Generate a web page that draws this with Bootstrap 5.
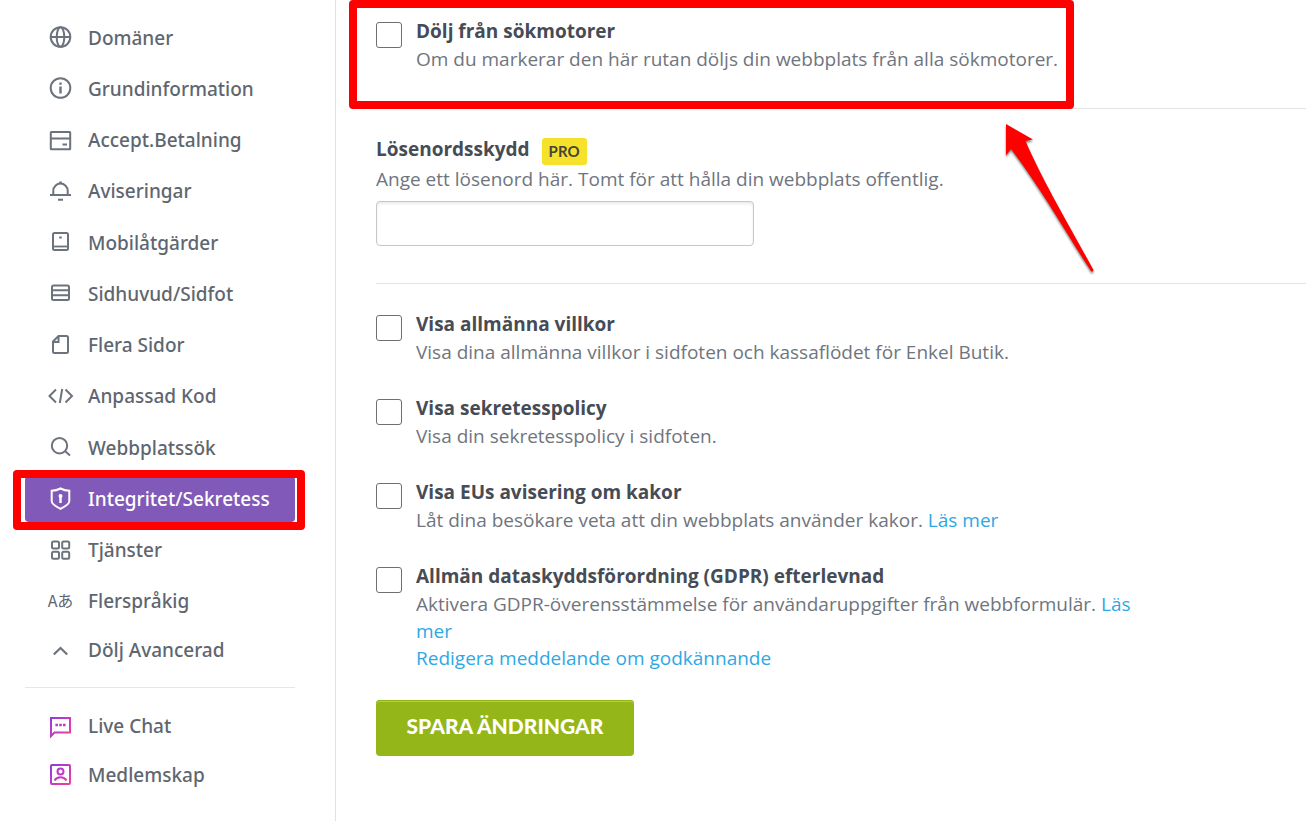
<!DOCTYPE html>
<html lang="sv">
<head>
<meta charset="utf-8">
<meta name="viewport" content="width=device-width, initial-scale=1">
<title>Integritet/Sekretess</title>
<link href="https://cdn.jsdelivr.net/npm/bootstrap@5.3.0/dist/css/bootstrap.min.css" rel="stylesheet">
<style>
  body { font-family: "Open Sans", "Noto Sans", sans-serif; font-size: 19px; line-height: 27px; color: #6f757e; }
  .sidebar { width: 336px; padding: 12px 40px 16px 25px; border-right: 1px solid #e2e2e4; }
  .menu-main { display: grid; grid-auto-rows: 1fr; min-height: 615px; }
  .menu-link { gap: 14px; padding: 0 0 0 22px; border-radius: 4px; color: #60666f; font-family: "Noto Sans", sans-serif; font-size: 19px; font-weight: 500; }
  .menu-main .menu-link { height: 46px; width: 100%; padding-top: 1px; }
  .menu-toggle { height: 47px; }
  .menu-extra .menu-link { height: 49px; }
  .menu-link svg { width: 27px; height: 26px; flex: none; fill: none; stroke: #6d737d; stroke-width: 2; }
  .menu-link.active { background: #8159b8; color: #fff; }
  .menu-link.active svg { stroke: #fff; }
  .menu-link svg.pink-icon { stroke: url(#pink); }
  .menu-rule { margin: 13px 0 14px; border-top: 1px solid #e6e6e8; opacity: 1; }
  .glyph { width: 27px; padding-bottom: 3px; font: 400 16px/26px "Noto Sans CJK JP", sans-serif; text-align: center; white-space: nowrap; }
  .callout-frame { border: 8px solid #f00; border-radius: 4px; pointer-events: none; }
  .frame-menu { inset: -6px -10px -8px -12px; }
  .content-pane { padding-left: 40px; }
  .setting { gap: 14px; max-width: 770px; }
  .setting-title { font-size: 19px; line-height: 29px; font-weight: 700; color: #464c55; }
  .setting a { color: #2ea8e4; text-decoration: none; }
  .form-check-input.tick { width: 26px; height: 26px; margin: 5px 0 0; border: 1px solid #6f6f6f; border-radius: 3px; flex: none; }
  .section-search { padding: 17px 0 35px; border-bottom: 1px solid #e2e2e4; }
  .frame-search { top: 0; bottom: -1px; left: -27px; width: 725px; }
  .arrow-mark { top: 118px; left: 624px; width: 100px; height: 160px; filter: drop-shadow(0 2px 1px rgba(0,0,0,.5)); }
  .section-password { padding: 26px 0 37px; border-bottom: 1px solid #e2e2e4; }
  .password-head { min-height: 31px; }
  .pro-tag { background: #f6e22b; color: #46443a; font: 700 15px/27px Lato, sans-serif; padding: 0 7px; border-radius: 3px; margin: 3px 0 0 12px; }
  .password-field { width: 378px; height: 45px; margin-top: 8px; border: 1px solid #c6c6cb; border-radius: 4px; box-shadow: inset 0 2px 3px rgba(0,0,0,.08); }
  .section-legal { padding-top: 26px; gap: 28px; }
  .save-btn { width: 258px; height: 56px; margin: 28px 0 16px; padding: 0 0 4px; border: 0; border-radius: 4px; background: #94b619; color: #fff; font: 900 21px/28px Lato, sans-serif; box-shadow: inset 0 1px 0 #94b619, inset 0 2px 0 #b0ca55; }
  .save-btn:hover { background: #87a716; color: #fff; }
</style>
</head>
<body>
<svg width="0" height="0" class="position-absolute" aria-hidden="true">
  <defs><linearGradient id="pink" x1="2" y1="2" x2="24" y2="24" gradientUnits="userSpaceOnUse"><stop offset="0" stop-color="#9038e0"/><stop offset=".6" stop-color="#cf3cba"/><stop offset="1" stop-color="#f5428c"/></linearGradient></defs>
</svg>
<div class="d-flex min-vh-100">
  <nav class="sidebar flex-shrink-0" aria-label="Inställningar">
    <ul class="menu-main list-unstyled m-0">
      <li class="d-flex align-items-center"><a href="#" class="menu-link d-flex align-items-center text-decoration-none"><svg viewBox="0 0 27 26"><circle cx="13.5" cy="12" r="9.8"/><ellipse cx="13.5" cy="12" rx="3.8" ry="9.8"/><path d="M3.5 12h20"/></svg>Domäner</a></li>
      <li class="d-flex align-items-center"><a href="#" class="menu-link d-flex align-items-center text-decoration-none"><svg viewBox="0 0 27 26"><circle cx="13.5" cy="12" r="9.8"/><path d="M13.5 10.5v7M13.5 6.5v2.2" stroke-width="2.4"/></svg>Grundinformation</a></li>
      <li class="d-flex align-items-center"><a href="#" class="menu-link d-flex align-items-center text-decoration-none"><svg viewBox="0 0 27 26"><rect x="3.8" y="4" width="19.4" height="17.2" rx=".5"/><path d="M4 10.4h19M15.5 16.5h4.5"/></svg>Accept.Betalning</a></li>
      <li class="d-flex align-items-center"><a href="#" class="menu-link d-flex align-items-center text-decoration-none"><svg viewBox="0 0 27 26"><path d="M3 16h21M6.3 16v-4.200a7.200 7.200 0 0 1 14.400 0V16M12.200 3.400h2.600M11 20.800h5"/></svg>Aviseringar</a></li>
      <li class="d-flex align-items-center"><a href="#" class="menu-link d-flex align-items-center text-decoration-none"><svg viewBox="0 0 27 26"><rect x="6" y="3" width="15" height="17" rx="1.500"/><path d="M7 16.500h13" stroke-width="1.800"/><path d="M12.200 7.500h2.600"/></svg>Mobilåtgärder</a></li>
      <li class="d-flex align-items-center"><a href="#" class="menu-link d-flex align-items-center text-decoration-none"><svg viewBox="0 0 27 26"><rect x="5" y="4.500" width="17" height="14.500" rx="1.500"/><path d="M5 9.300h17M5 14.200h17"/></svg>Sidhuvud/Sidfot</a></li>
      <li class="d-flex align-items-center"><a href="#" class="menu-link d-flex align-items-center text-decoration-none"><svg viewBox="0 0 27 26"><path d="M11.500 3H19.500a1.500 1.500 0 0 1 1.500 1.500V18.500a1.500 1.500 0 0 1-1.500 1.500H7.500A1.500 1.500 0 0 1 6 18.500V8.500ZM11.500 3.500V9H6"/></svg>Flera Sidor</a></li>
      <li class="d-flex align-items-center"><a href="#" class="menu-link d-flex align-items-center text-decoration-none"><svg viewBox="0 0 27 26"><path d="M9 5.500 2.500 12 9 18.500M18.500 5.500 25 12l-6.500 6.500M15.200 5l-2.400 14"/></svg>Anpassad Kod</a></li>
      <li class="d-flex align-items-center"><a href="#" class="menu-link d-flex align-items-center text-decoration-none"><svg viewBox="0 0 27 26"><circle cx="12.500" cy="10.700" r="7.700"/><path d="m18 16 5 4.500"/></svg>Webbplatssök</a></li>
      <li class="d-flex align-items-center"><a href="#" aria-current="page" class="menu-link active position-relative d-flex align-items-center text-decoration-none"><svg viewBox="0 0 27 26"><path d="M13.500 2.500c2.800 1.500 5.500 2.200 8.800 2.300v10.500c0 3.200-4.600 5.500-8.800 7.500-4.200-2-8.800-4.300-8.800-7.500V4.800c3.300-.1 6-.8 8.800-2.300Z"/><path d="M13.500 10v7" stroke-width="2.400"/><circle cx="13.500" cy="10" r="1" /></svg>Integritet/Sekretess<span class="callout-frame frame-menu position-absolute"></span></a></li>
      <li class="d-flex align-items-center"><a href="#" class="menu-link d-flex align-items-center text-decoration-none"><svg viewBox="0 0 27 26"><rect x="5" y="3.500" width="7" height="7" rx="1.500"/><rect x="15.200" y="3.500" width="7" height="7" rx="1.500"/><rect x="5" y="13.700" width="7" height="7" rx="1.500"/><rect x="15.200" y="13.700" width="7" height="7" rx="1.500"/></svg>Tjänster</a></li>
      <li class="d-flex align-items-center"><a href="#" class="menu-link d-flex align-items-center text-decoration-none"><span class="glyph" aria-hidden="true">Aあ</span>Flerspråkig</a></li>
    </ul>
    <button type="button" class="menu-link menu-toggle d-flex align-items-center w-100 border-0 bg-transparent"><svg viewBox="0 0 27 26"><path d="m6.800 16.500 6.700-6.500 6.700 6.500" stroke-width="2.200"/></svg>Dölj Avancerad</button>
    <hr class="menu-rule">
    <ul class="menu-extra list-unstyled m-0">
      <li><a href="#" class="menu-link d-flex align-items-center text-decoration-none"><svg class="pink-icon" viewBox="0 0 27 26"><path d="M4 22V4h19v14.500H7.500Z"/><path d="M8.400 11H11M12.200 11h2.600M16 11h2.600" stroke="#c33bc4" stroke-width="2.600"/></svg>Live Chat</a></li>
      <li><a href="#" class="menu-link d-flex align-items-center text-decoration-none"><svg class="pink-icon" viewBox="0 0 27 26"><rect x="4" y="2" width="19" height="19" rx="1"/><circle cx="13.500" cy="8.500" r="3"/><path d="M7.500 17.500c2.500-4.300 9.500-4.300 12 0"/></svg>Medlemskap</a></li>
    </ul>
  </nav>
  <main class="content-pane flex-grow-1">
    <form>
      <section class="section-search position-relative">
        <div class="setting d-flex">
          <input class="form-check-input tick" type="checkbox" id="hide-search">
          <div><label class="setting-title d-block" for="hide-search">Dölj från sökmotorer</label>Om du markerar den här rutan döljs din webbplats från alla sökmotorer.</div>
        </div>
        <span class="callout-frame frame-search position-absolute"></span>
        <svg class="arrow-mark position-absolute" viewBox="0 0 100 160" aria-hidden="true"><path fill="#f00" d="M6 6 33 21.500 25.500 23C43 63 65 100 93.500 152Q93 154.500 91 153C64 112 44 75 11 31L6 37.500Z"/></svg>
      </section>
      <section class="section-password">
        <div class="password-head d-flex align-items-start">
          <label class="setting-title" for="site-password">Lösenordsskydd</label><span class="pro-tag">PRO</span>
        </div>
        <div>Ange ett lösenord här. Tomt för att hålla din webbplats offentlig.</div>
        <input class="form-control password-field" type="password" id="site-password" autocomplete="new-password">
      </section>
      <section class="section-legal d-flex flex-column">
        <div class="setting d-flex">
          <input class="form-check-input tick" type="checkbox" id="terms">
          <div><label class="setting-title d-block" for="terms">Visa allmänna villkor</label>Visa dina allmänna villkor i sidfoten och kassaflödet för Enkel Butik.</div>
        </div>
        <div class="setting d-flex">
          <input class="form-check-input tick" type="checkbox" id="policy">
          <div><label class="setting-title d-block" for="policy">Visa sekretesspolicy</label>Visa din sekretesspolicy i sidfoten.</div>
        </div>
        <div class="setting d-flex">
          <input class="form-check-input tick" type="checkbox" id="cookies">
          <div><label class="setting-title d-block" for="cookies">Visa EUs avisering om kakor</label>Låt dina besökare veta att din webbplats använder kakor. <a href="#">Läs mer</a></div>
        </div>
        <div class="setting d-flex">
          <input class="form-check-input tick" type="checkbox" id="gdpr">
          <div><label class="setting-title d-block" for="gdpr">Allmän dataskyddsförordning (GDPR) efterlevnad</label>Aktivera GDPR-överensstämmelse för användaruppgifter från webbformulär. <a href="#">Läs mer</a><a href="#" class="d-block">Redigera meddelande om godkännande</a></div>
        </div>
      </section>
      <button type="submit" class="btn save-btn">SPARA ÄNDRINGAR</button>
    </form>
  </main>
</div>
<script src="https://cdn.jsdelivr.net/npm/bootstrap@5.3.0/dist/js/bootstrap.bundle.min.js"></script>
</body>
</html>
